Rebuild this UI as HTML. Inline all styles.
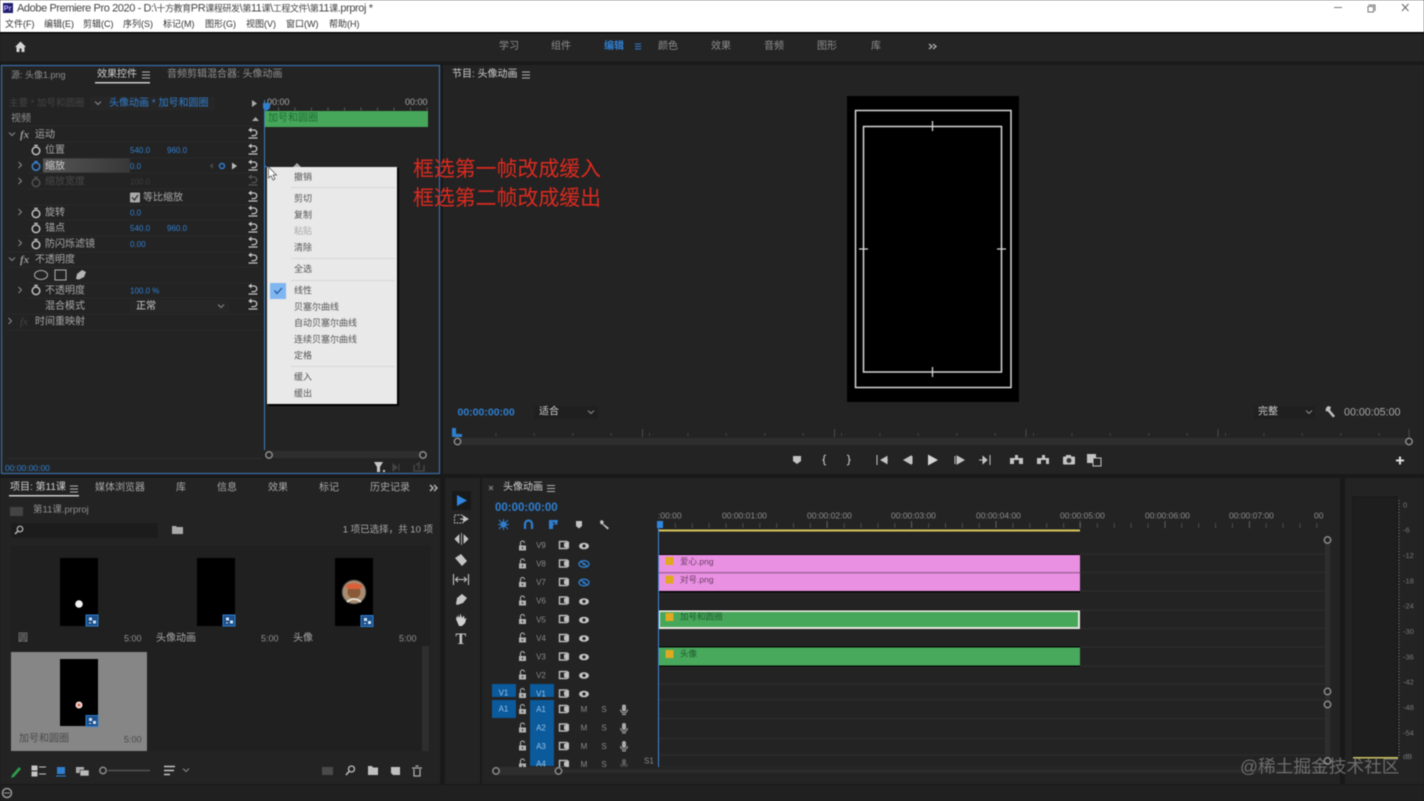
<!DOCTYPE html>
<html lang="zh-CN"><head><meta charset="utf-8"><title>Adobe Premiere Pro 2020</title>
<style>
html,body{margin:0;padding:0;width:1424px;height:801px;overflow:hidden;background:#191919}
svg{display:block;position:absolute;left:0;top:0;filter:blur(.45px)}
text{font-family:"Liberation Sans","Noto Sans CJK SC",sans-serif;font-size:10px;fill:#a8a8a8;dominant-baseline:central;white-space:pre;transform:translateY(.7px)}
.b{fill:#2f7fd0}.d{fill:#555}.w{fill:#cfcfcf}.g{fill:#8f8f8f}
.tk{font-size:8.5px;fill:#8e8e8e}.v{font-size:8px;fill:#8a8a8a}.db{font-size:7.5px;fill:#777}
.l{font-size:11px}.c{font-size:9px}.mn{font-size:9px;fill:#333}.cx{font-size:9px;fill:#555}.n{font-size:8px}
</style></head><body>
<svg width="1424" height="801" viewBox="0 0 1424 801" xmlns="http://www.w3.org/2000/svg">
<defs>
<linearGradient id="sc"><stop offset="0" stop-color="#555"/><stop offset="1" stop-color="#383838"/></linearGradient>
<g id="rs"><path d="M-4.500 5H4.500M-2.500-3H1A2.800 2.800 0 0 1 1 2.600H-1.500" fill="none" stroke="#c4c4c4" stroke-width="1.300"/><path d="M-1.500-5.500-4.800-3-1.500-.5Z" fill="#c4c4c4"/></g>
<g id="sw"><circle r="3.800" cy=".8" fill="none" stroke="#c0c0c0" stroke-width="1.500"/><path d="M-1.800-4.600H1.800" stroke="#c0c0c0" stroke-width="1.400"/></g>
<path id="chR" d="M-1.500-3 1.500 0-1.500 3" fill="none" stroke="#8a8a8a" stroke-width="1"/>
<path id="chD" d="M-3-1.500 0 1.500 3-1.500" fill="none" stroke="#8a8a8a" stroke-width="1"/>
<g id="lk"><rect x="-3.500" y="-.5" width="7" height="5" fill="#b5b5b5"/><path d="M-2-.5V-3A2 2 0 0 1 2-3" fill="none" stroke="#b5b5b5" stroke-width="1.100"/><rect x="-.6" y="1" width="1.200" height="2" fill="#333"/></g>
<g id="fm"><rect x="-4.500" y="-3.500" width="7.500" height="7" fill="none" stroke="#c0c0c0" stroke-width="1.400"/><path d="M0-2 5-3.500V3.500L0 2Z" fill="#c0c0c0"/></g>
<g id="ey"><ellipse rx="5" ry="3.300" fill="#c4c4c4"/><circle r="1.600" fill="#222"/></g>
<g id="eb"><ellipse rx="5" ry="3.300" fill="none" stroke="#2f7fd0" stroke-width="1.300"/><circle r="1.300" fill="#2f7fd0"/><path d="M-4-3 4 3" stroke="#2f7fd0" stroke-width="1.200"/></g>
<g id="mic"><rect x="-2" y="-5" width="4" height="7" rx="2" fill="#aaa"/><path d="M-3.500 0A3.500 3.500 0 0 0 3.500 0M-2 5H2" fill="none" stroke="#aaa"/></g>
<g id="hb"><path d="M-4-3H4M-4 0H4M-4 3H4" stroke="#b0b0b0" stroke-width="1.100"/></g>
<g id="kn"><circle r="3.200" fill="#222" stroke="#8c8c8c" stroke-width="1.500"/></g>
<g id="bd"><rect x="-6" y="-5.500" width="12" height="11" fill="#1d4f88" stroke="#2f7fd0"/><path d="M-3-3H0V0H-3ZM1 0H4V3H1ZM-3 2H-1V3H-3Z" fill="#cfe0f2"/></g>
</defs>

<!-- chrome -->
<rect width="1424" height="801" fill="#191919"/>
<rect width="1424" height="32" fill="#fff"/>
<rect y="32" width="1424" height="1.500" fill="#000"/>
<rect y="33.500" width="1424" height="28" fill="#242424"/>
<rect x="3" y="3" width="10" height="10" fill="#1f1f6b"/><text x="3.600" y="7.500" style="font-size:7.500px;font-weight:bold;fill:#b9a4ff">Pr</text>
<text x="17" y="8" textLength="356" style="fill:#444"><tspan class="l" style="fill:#444">Adobe Premiere Pro 2020 - D:\</tspan><tspan class="c" style="fill:#444">十方教育</tspan><tspan class="l" style="fill:#444">PR</tspan><tspan class="c" style="fill:#444">课程研发</tspan><tspan class="l" style="fill:#444">\</tspan><tspan class="c" style="fill:#444">第</tspan><tspan class="l" style="fill:#444">11</tspan><tspan class="c" style="fill:#444">课</tspan><tspan class="l" style="fill:#444">\</tspan><tspan class="c" style="fill:#444">工程文件</tspan><tspan class="l" style="fill:#444">\</tspan><tspan class="c" style="fill:#444">第</tspan><tspan class="l" style="fill:#444">11</tspan><tspan class="c" style="fill:#444">课</tspan><tspan class="l" style="fill:#444">.prproj *</tspan></text>
<text x="5" y="23.500" class="mn">文件(F)</text><text x="44" y="23.500" class="mn">编辑(E)</text><text x="83" y="23.500" class="mn">剪辑(C)</text><text x="123" y="23.500" class="mn">序列(S)</text><text x="163" y="23.500" class="mn">标记(M)</text><text x="205" y="23.500" class="mn">图形(G)</text><text x="246" y="23.500" class="mn">视图(V)</text><text x="286" y="23.500" class="mn">窗口(W)</text><text x="329" y="23.500" class="mn">帮助(H)</text>
<path d="M1334 7.500H1342" stroke="#777"/><path d="M1368.500 5H1375V11M1368 6.500H1373.500V12H1368Z" fill="none" stroke="#777"/><path d="M1402 4 1408.500 11M1408.500 4 1402 11" stroke="#666"/>

<!-- workspace bar -->
<path d="M20.500 41.500 15 47H16.500V52H19.500V48.500H21.500V52H24.500V47H26Z" fill="#d5d5d5"/>
<text x="499" y="46" class="g">学习</text><text x="551" y="46" class="g">组件</text><text x="604" y="46" class="b" style="font-weight:bold">编辑</text>
<path d="M635 44H641M635 46.500H641M635 49H641" stroke="#2f7fd0"/>
<text x="658" y="46" class="g">颜色</text><text x="711" y="46" class="g">效果</text><text x="764" y="46" class="g">音频</text><text x="817" y="46" class="g">图形</text><text x="871" y="46" class="g">库</text>
<path d="M929 44 932 46.500 929 49M933 44 936 46.500 933 49" fill="none" stroke="#aaa" stroke-width="1.400"/>

<!-- panels -->
<rect x="1.500" y="65.500" width="438" height="408" fill="#232323" stroke="#3a6ea8" stroke-width="1.200"/>
<rect x="443" y="65" width="981" height="409" fill="#232323"/>
<rect x="0" y="478" width="440" height="306" fill="#232323"/>
<rect x="445" y="478" width="35" height="306" fill="#232323"/>
<rect x="482" y="478" width="858" height="306" fill="#232323"/>
<rect x="1345" y="478" width="79" height="306" fill="#232323"/>
<rect y="785" width="1424" height="16" fill="#202020"/>
<circle cx="7" cy="793" r="4.500" fill="none" stroke="#999" stroke-width="1.500"/><path d="M4 793H10" stroke="#999"/>

<!-- effect controls -->
<text x="11" y="74.500" class="g" style="font-size:9px">源: 头像1.png</text>
<text x="97" y="74" class="w">效果控件</text><use href="#hb" x="146" y="75"/>
<rect x="95" y="82" width="55" height="1.500" fill="#ccc"/>
<text x="167" y="74" class="g">音频剪辑混合器: 头像动画</text>
<text x="9" y="103" style="fill:#444;font-size:9.500px">主要 * 加号和圆圈</text>
<rect x="90" y="97" width="125" height="13" fill="#262626"/><use href="#chD" x="98" y="103"/>
<text x="109" y="103" class="b">头像动画 * 加号和圆圈</text>
<path d="M252 100 257 103.500 252 107Z" fill="#aaa"/>
<text x="267" y="101.500" style="font-size:9px;fill:#aaa">00:00</text><text x="405" y="101.500" style="font-size:9px">00:00</text>
<path d="M263 103H270V108L266.500 111 263 108Z" fill="#2f7fd0"/>
<line x1="278" y1="109" x2="428" y2="109" stroke="#5a5a5a" stroke-width="3" stroke-dasharray="1 15.500"/>
<rect x="265" y="111" width="163" height="16" fill="#46a75a"/><text x="268" y="118" style="fill:#1f6b32">加号和圆圈</text>
<line x1="264.500" y1="100" x2="264.500" y2="450" stroke="#3f7fc0"/>
<path d="M8 126H260M28 142H260M28 158H260M28 173H260M28 189H260M28 205H260M28 220H260M28 236H260M8 252H260M8 267H260M28 283H260M28 298H260M8 314H260M8 330H260" stroke="#292929"/>
<text x="11" y="118.500" class="g">视频</text><path d="M252 121 255.500 117 259 121Z" fill="#aaa"/>
<use href="#chD" x="12" y="134"/><text x="20" y="134.500" style="font-family:'Liberation Serif',serif;font-style:italic;font-size:11px;font-weight:bold;fill:#9a9a9a">fx</text><text x="35" y="134.500">运动</text><use href="#rs" x="253" y="133"/>
<use href="#sw" x="36" y="150"/><text x="45" y="150">位置</text><text x="130" y="150" class="b n">540.0</text><text x="167" y="150" class="b n">960.0</text><use href="#rs" x="253" y="149"/>
<use href="#chR" x="20" y="165"/><rect x="43" y="158.500" width="87" height="14" fill="url(#sc)"/>
<circle cx="36" cy="166.500" r="3.800" fill="none" stroke="#3b82cf" stroke-width="1.500"/><path d="M34.200 161.500H37.800" stroke="#3b82cf" stroke-width="1.300"/>
<text x="45" y="166" class="w">缩放</text><text x="130" y="166" class="b n">0.0</text>
<path d="M213 163 209.500 166 213 169Z" fill="#444"/><circle cx="222" cy="166" r="2.500" fill="none" stroke="#2f7fd0" stroke-width="1.400"/><path d="M232 162.500 237 166 232 169.500Z" fill="#bbb"/><use href="#rs" x="253" y="165"/>
<use href="#chR" x="20" y="181"/><g opacity=".3"><use href="#sw" x="36" y="182"/></g><text x="45" y="181.500" style="fill:#484848">缩放宽度</text><text x="130" y="181.500" class="n" style="fill:#3d3d3d">100.0</text><g opacity=".3"><use href="#rs" x="253" y="180"/></g>
<rect x="130" y="192.500" width="10" height="10" rx="1" fill="#aaa"/><path d="M132 197.500 134.500 200 138 195" fill="none" stroke="#333" stroke-width="1.300"/><text x="143" y="197.500">等比缩放</text><use href="#rs" x="253" y="196"/>
<use href="#chR" x="20" y="212"/><use href="#sw" x="36" y="213"/><text x="45" y="212.500">旋转</text><text x="130" y="212.500" class="b n">0.0</text><use href="#rs" x="253" y="211"/>
<use href="#sw" x="36" y="228"/><text x="45" y="228">锚点</text><text x="130" y="228" class="b n">540.0</text><text x="167" y="228" class="b n">960.0</text><use href="#rs" x="253" y="227"/>
<use href="#chR" x="20" y="243"/><use href="#sw" x="36" y="244"/><text x="45" y="244">防闪烁滤镜</text><text x="130" y="244" class="b n">0.00</text><use href="#rs" x="253" y="242"/>
<use href="#chD" x="12" y="259"/><text x="20" y="259.500" style="font-family:'Liberation Serif',serif;font-style:italic;font-size:11px;font-weight:bold;fill:#9a9a9a">fx</text><text x="35" y="259.500">不透明度</text><use href="#rs" x="253" y="258"/>
<ellipse cx="41" cy="275" rx="6.500" ry="4.500" fill="none" stroke="#b0b0b0"/><rect x="55" y="270" width="11" height="10" fill="none" stroke="#b0b0b0"/><path d="M76 279 77 274 82 270 86 272 84 277 79 279.500Z" fill="#b5b5b5"/>
<use href="#chR" x="20" y="290"/><use href="#sw" x="36" y="290"/><text x="45" y="290.500">不透明度</text><text x="130" y="290.500" class="b n">100.0 %</text><use href="#rs" x="253" y="289"/>
<text x="45" y="306">混合模式</text><rect x="130" y="300" width="99" height="12" fill="#262626"/><text x="136" y="306" class="w">正常</text><use href="#chD" x="221" y="306"/><use href="#rs" x="253" y="304"/>
<use href="#chR" x="10" y="321"/><text x="20" y="321.500" style="font-family:'Liberation Serif',serif;font-style:italic;font-size:11px;fill:#444">fx</text><text x="35" y="321.500">时间重映射</text>
<rect x="269" y="451" width="154" height="7" fill="#2e2e2e"/><use href="#kn" x="269" y="455"/><use href="#kn" x="423" y="455"/>
<path d="M8 458.500H262" stroke="#2e2e2e"/>
<text x="5" y="467.500" class="b" style="font-size:8.500px">00:00:00:00</text>
<path d="M374 462H383L380 467V472H377V467Z" fill="#c8c8c8"/><rect x="383" y="470" width="2" height="2" fill="#c8c8c8"/>
<path d="M393 464 397 467.500 393 471ZM399 464V471" fill="#444" stroke="#444"/><path d="M414 465V471H424V465M419 469V463L416 465" fill="none" stroke="#444" stroke-width="1.500"/>

<!-- graph marker -->
<path d="M297 163 301 167H293Z" fill="#aaa"/>
<path d="M264 165 267 166.500 264 168Z" fill="#2f7fd0"/>

<!-- context menu -->
<rect x="268" y="168" width="131" height="238" fill="#000"/>
<rect x="267" y="167" width="130" height="237" fill="#e9e9e9"/>
<text x="294" y="176.500" class="cx">撤销</text><text x="294" y="198" class="cx">剪切</text><text x="294" y="214.500" class="cx">复制</text><text x="294" y="230.500" class="cx" style="fill:#aaa">粘贴</text><text x="294" y="247" class="cx">清除</text><text x="294" y="268.500" class="cx">全选</text><text x="294" y="290" class="cx">线性</text><text x="294" y="306.500" class="cx">贝塞尔曲线</text><text x="294" y="322.500" class="cx">自动贝塞尔曲线</text><text x="294" y="339" class="cx">连续贝塞尔曲线</text><text x="294" y="355" class="cx">定格</text><text x="294" y="376.500" class="cx">缓入</text><text x="294" y="393" class="cx">缓出</text>
<path d="M291 187.500H395M291 258.500H395M291 280.500H395M291 366.500H395" stroke="#d6d6d6"/>
<rect x="270" y="283" width="16" height="16" fill="#80b6ef"/><path d="M274.500 290.500 277 293.500 282 288" fill="none" stroke="#1c5aa8" stroke-width="1.300"/>
<path d="M268.500 167V178L271 175.800 273 180 275 179 273 175H276.500Z" fill="#fff" stroke="#444" stroke-width=".7"/>

<!-- red text -->
<text x="413" y="167.500" style="font-size:20.900px;fill:#dd2a1f;font-family:'Noto Sans CJK SC',sans-serif">框选第一帧改成缓入</text>
<text x="413" y="196.500" style="font-size:20.900px;fill:#dd2a1f;font-family:'Noto Sans CJK SC',sans-serif">框选第二帧改成缓出</text>

<!-- program monitor -->
<text x="452" y="74" class="w">节目: 头像动画</text><use href="#hb" x="526" y="75"/>
<rect x="847" y="96" width="172" height="306" fill="#000"/>
<rect x="855.500" y="110.500" width="155.500" height="277" fill="none" stroke="#d5d5d5" stroke-width="1.500"/>
<rect x="863.500" y="126.500" width="138" height="245.500" fill="none" stroke="#d5d5d5" stroke-width="1.500"/>
<path d="M932.500 121V131M932.500 367V377M859 249H868M997 249H1006" stroke="#d5d5d5" stroke-width="1.300"/>
<text x="457.500" y="412" class="b" style="font-size:10.500px;font-weight:bold">00:00:00:00</text>
<rect x="534" y="406" width="64" height="13" fill="#1f1f1f"/><text x="539" y="411.500" class="w">适合</text><use href="#chD" x="591" y="412"/>
<rect x="1254" y="406" width="61" height="13" fill="#1f1f1f"/><text x="1258" y="411.500" class="w">完整</text><use href="#chD" x="1309" y="412"/>
<path d="M1326 408 1328 406 1331 407 1330 410 1335 416 1333 417.500 1328 411.500 1325.500 411Z" fill="#c0c0c0"/>
<text x="1344" y="412" style="font-size:10.700px;fill:#a8a8a8">00:00:05:00</text>
<line x1="457" y1="434.500" x2="1409" y2="434.500" stroke="#444" stroke-width="3" stroke-dasharray="1 37.400"/>
<path d="M642.500 429V437M834.500 429V437M1026 429V437M1218 429V437M1409 429V437" stroke="#4a4a4a"/>
<rect x="457" y="438" width="952" height="7" fill="#2e2e2e"/>
<path d="M452 428H456V434H462V437H452Z" fill="#2f7fd0"/>
<use href="#kn" x="457.500" y="441.500"/><use href="#kn" x="1409" y="441.500"/>
<path d="M793 456H801V461L797 464 793 461Z" fill="#c4c4c4"/>
<path d="M826 455Q824 455 824 457.500V459L823 460 824 461V462.500Q824 465 826 465M847 455Q849 455 849 457.500V459L850 460 849 461V462.500Q849 465 847 465" fill="none" stroke="#c4c4c4" stroke-width="1.100"/>
<path d="M877 455V465M887 456.500 881 460 887 463.500ZM885 460H888" fill="#c4c4c4" stroke="#c4c4c4"/>
<path d="M911 456 904 460 911 464ZM912 456V464" fill="#c4c4c4" stroke="#c4c4c4"/>
<path d="M928 454.500 938 460 928 465.500Z" fill="#d5d5d5"/>
<path d="M955 456V464M957 456 964 460 957 464Z" fill="#c4c4c4" stroke="#c4c4c4"/>
<path d="M979 460H986M983 456.500 987 460 983 463.500ZM990 455V465" fill="#c4c4c4" stroke="#c4c4c4"/>
<path d="M1010 458H1015V455H1018V458H1023V464H1010Z" fill="#c4c4c4"/><rect x="1014" y="460" width="5" height="4" fill="#232323"/>
<path d="M1037 458H1042V455H1045V458H1049V464H1037Z" fill="#c4c4c4"/><rect x="1041" y="460" width="5" height="4" fill="#232323"/>
<rect x="1063" y="456.500" width="12" height="8" rx="1" fill="#c4c4c4"/><rect x="1066" y="455" width="5" height="2" fill="#c4c4c4"/><circle cx="1069" cy="460.500" r="2.500" fill="#333"/>
<rect x="1087" y="454" width="9" height="9" fill="#c4c4c4"/><rect x="1093" y="458" width="8" height="8" fill="#232323" stroke="#c4c4c4"/>
<path d="M1400 456.500V464.500M1396 460.500H1404" stroke="#ddd" stroke-width="2"/>

<!-- project panel -->
<text x="10" y="487" class="w">项目: 第11课</text><use href="#hb" x="74" y="489"/><rect x="9" y="495" width="70" height="1.500" fill="#ccc"/>
<text x="95" y="487.500">媒体浏览器</text><text x="176" y="487.500">库</text><text x="217" y="487.500">信息</text><text x="268" y="487.500">效果</text><text x="319" y="487.500">标记</text><text x="370" y="487.500">历史记录</text>
<path d="M430 485 433 488 430 491M434 485 437 488 434 491" fill="none" stroke="#bbb" stroke-width="1.400"/>
<rect x="10" y="507" width="13" height="9" fill="#444"/><text x="33" y="509.500" class="g" style="font-size:9.500px">第11课.prproj</text>
<rect x="11" y="523" width="147" height="15" fill="#1c1c1c"/><circle cx="20" cy="529" r="2.800" fill="none" stroke="#bbb" stroke-width="1.200"/><path d="M18 531 15 534" stroke="#bbb" stroke-width="1.400"/>
<path d="M172 526H176L177 527H183V534H172Z" fill="#aaa"/>
<text x="433" y="529.500" text-anchor="end" style="font-size:9.500px">1 项已选择，共 10 项</text>
<rect x="11" y="546" width="419" height="205" fill="#202020"/>
<rect x="60" y="558" width="38" height="68" fill="#000"/><circle cx="79" cy="604" r="3.800" fill="#f2f2f2"/>
<use href="#bd" x="92" y="620.500"/>
<rect x="197" y="558" width="38" height="68" fill="#000"/><use href="#bd" x="229" y="620.500"/>
<rect x="335" y="558" width="38" height="68" fill="#000"/><circle cx="354" cy="592" r="12" fill="#a88c72" stroke="#3a3a3a"/><circle cx="354" cy="592" r="6.500" fill="#8a5a38"/><path d="M345 586Q354 580 363 586L360 589 348 589Z" fill="#d8613a"/><path d="M347 602Q354 596 361 602" stroke="#e6dfd2" stroke-width="2" fill="none"/><use href="#bd" x="367" y="621"/>
<text x="18" y="638" class="g">圆</text><text x="124" y="638" class="g" style="font-size:9px">5:00</text>
<text x="156" y="638">头像动画</text><text x="261" y="638" class="g" style="font-size:9px">5:00</text>
<text x="293" y="638">头像</text><text x="399" y="638" class="g" style="font-size:9px">5:00</text>
<rect x="11" y="652" width="136" height="99" fill="#868686"/>
<rect x="60" y="659" width="38" height="67" fill="#000"/><circle cx="79" cy="705" r="3.500" fill="#f2d8d0"/><circle cx="79" cy="705" r="1.500" fill="#e06a50"/><use href="#bd" x="92" y="721"/>
<text x="19" y="738.500" style="fill:#4a4a4a">加号和圆圈</text><text x="124" y="739" style="font-size:9px;fill:#4a4a4a">5:00</text>
<rect x="422" y="646" width="7" height="105" fill="#2e2e2e"/>
<path d="M12 775 19 767 21 769 14 777 11 778Z" fill="#2e9c4a"/>
<path d="M32 766H37V770H32ZM32 772H37V776H32ZM39 767H46M39 774H46" fill="#c4c4c4" stroke="#c4c4c4"/>
<rect x="57" y="767" width="8" height="7" fill="#2f7fd0"/><path d="M56 776H66" stroke="#2f7fd0"/>
<rect x="76" y="767" width="8" height="6" fill="#aaa"/><rect x="80" y="770" width="9" height="6" fill="#bbb" stroke="#232323" stroke-width=".6"/>
<use href="#kn" x="103" y="770.500"/><path d="M108 770.500H150" stroke="#555" stroke-width="1.500"/>
<path d="M164 766.500H175M164 770.500H174M164 774.500H170" stroke="#c4c4c4" stroke-width="1.500"/><use href="#chD" x="186" y="770"/>
<path d="M322 767H333V775H322Z" fill="#4a4a4a"/>
<circle cx="351.500" cy="769" r="3" fill="none" stroke="#bbb" stroke-width="1.300"/><path d="M349 771.500 346 775" stroke="#bbb" stroke-width="1.500"/>
<path d="M368 766H372L373 767.500H378V775H368Z" fill="#c0c0c0"/>
<path d="M391 767H400V775H393L391 773Z" fill="#c0c0c0"/>
<path d="M412 768H422M414 769V776H420V769M415.500 766H418.500" fill="none" stroke="#aaa" stroke-width="1.300"/>

<!-- tools -->
<rect x="452" y="491" width="19" height="19" fill="#191919"/><path d="M457 495V506L467 500.500Z" fill="#2f87e0"/>
<path d="M454.500 515H463V523H454.500Z" fill="none" stroke="#b5b5b5" stroke-dasharray="2 1"/><path d="M460 519H466M464 516.500 468 519 464 521.500Z" fill="#c4c4c4" stroke="#c4c4c4"/>
<path d="M461.500 533V545M459 535 455 539 459 543ZM464 535 468 539 464 543Z" fill="#c4c4c4" stroke="#c4c4c4" stroke-width=".8"/>
<path d="M455 558 461 554 467 561 462 566Z" fill="#c4c4c4"/>
<path d="M453.500 574V585M468.500 574V585M456 579.500H466M458 577 455.500 579.500 458 582M464 577 466.500 579.500 464 582" fill="none" stroke="#c4c4c4" stroke-width="1.100"/>
<path d="M456 604 457 598 462 594 467 598 463 603 457 605Z" fill="#c4c4c4"/>
<path d="M456 619 457 616 458 618V614.500L459.500 618 460.500 613.500 462 618 464 615.500 464.500 619 466.500 618 465 623 462 626H459Z" fill="#d0d0d0"/>
<text x="455.500" y="639" style="font-family:'Liberation Serif',serif;font-size:16px;font-weight:bold;fill:#c8c8c8">T</text>

<!-- timeline -->
<path d="M489 486 493 490M493 486 489 490" stroke="#888"/>
<text x="503" y="487" class="w">头像动画</text><use href="#hb" x="551" y="488.500"/>
<text x="495" y="507.500" class="b" style="font-size:11.500px;font-weight:bold">00:00:00:00</text>
<circle cx="503.500" cy="524.500" r="3" fill="#2f7fd0"/><path d="M499 520 508 529M508 520 499 529M503.500 519V530M498 524.500H509" stroke="#2f7fd0"/>
<path d="M525 529V524A3.500 3.500 0 0 1 532 524V529" fill="none" stroke="#2f7fd0" stroke-width="2.200"/>
<path d="M549 520H558L557 525H553V529H549Z" fill="#2f7fd0"/><path d="M553 522 558 528" stroke="#222"/>
<path d="M576 521H582V526L579 528.500 576 526Z" fill="#c4c4c4"/>
<path d="M600 521 602 520 604 522 603 523.500 609 528 607.500 529.500 602.500 524.500 600.500 524Z" fill="#c4c4c4"/>
<text x="658" y="515" class="tk">:00:00</text><text x="722" y="515" class="tk">00:00:01:00</text><text x="807" y="515" class="tk">00:00:02:00</text><text x="891" y="515" class="tk">00:00:03:00</text><text x="976" y="515" class="tk">00:00:04:00</text><text x="1060" y="515" class="tk">00:00:05:00</text><text x="1145" y="515" class="tk">00:00:06:00</text><text x="1229" y="515" class="tk">00:00:07:00</text><text x="1314" y="515" class="tk">00</text>
<line x1="658" y1="525.500" x2="1325" y2="525.500" stroke="#4c4c4c" stroke-width="5" stroke-dasharray="1 15.880"/>
<path d="M827 521V528M911.500 521V528M996 521V528M1080 521V528M1165 521V528M1249.500 521V528" stroke="#5c5c5c"/>
<rect x="658" y="529.500" width="422" height="2" fill="#d9c45a"/>
<path d="M658 554H1326M658 572.500H1326M658 591H1326M658 610H1326M658 628.500H1326M658 647H1326M658 666H1326M658 684H1326M658 699.500H1326M658 718.500H1326M658 738.500H1326M658 755H1326M658 767H1326" stroke="#2e2e2e"/>
<rect x="658" y="554" width="422" height="38.500" fill="#000"/>
<rect x="658" y="555" width="422" height="17.500" fill="#ea90e2"/><rect x="658" y="573.500" width="422" height="17.500" fill="#ea90e2"/><rect x="658" y="572" width="422" height="1.500" fill="#a866a2"/>
<rect x="658" y="610" width="422" height="19" fill="#e8e8e0"/><rect x="660" y="612" width="418" height="15" fill="#46a75a"/><rect x="658" y="609.500" width="422" height=".8" fill="#000"/>
<rect x="658" y="646.500" width="422" height="20" fill="#000"/><rect x="658" y="647.500" width="422" height="18" fill="#48a85c"/>
<rect x="665.500" y="557" width="8" height="8" fill="#e0a91f"/><rect x="665.500" y="575.500" width="8" height="8" fill="#e0a91f"/><rect x="665.500" y="613" width="8" height="8" fill="#e0a91f"/><rect x="665.500" y="650" width="8" height="8" fill="#e0a91f"/>
<text x="680" y="561" style="font-size:8.500px;fill:#6a3c66">爱心.png</text><text x="680" y="579" style="font-size:8.500px;fill:#6a3c66">对号.png</text><text x="680" y="616" style="font-size:8.500px;fill:#1e5a2c">加号和圆圈</text><text x="680" y="653" style="font-size:8.500px;fill:#1e5a2c">头像</text>
<line x1="658.500" y1="522" x2="658.500" y2="767" stroke="#3f86d8"/>
<path d="M657 521H663V528H657Z" fill="#2f87e0"/>

<!-- track headers -->
<rect x="492" y="684" width="24" height="13" fill="#0a5a9c"/><rect x="492" y="700" width="24" height="18" fill="#0a5a9c"/>
<rect x="530" y="684" width="24" height="13" fill="#0a5a9c"/><rect x="530" y="700" width="24" height="66" fill="#0a5a9c"/>
<use href="#lk" x="522.500" y="546"/><use href="#lk" x="522.500" y="564"/><use href="#lk" x="522.500" y="582.500"/><use href="#lk" x="522.500" y="601"/><use href="#lk" x="522.500" y="619.500"/><use href="#lk" x="522.500" y="638"/><use href="#lk" x="522.500" y="656.500"/><use href="#lk" x="522.500" y="675"/><use href="#lk" x="522.500" y="693.500"/><use href="#lk" x="522.500" y="709.500"/><use href="#lk" x="522.500" y="728"/><use href="#lk" x="522.500" y="746"/><use href="#lk" x="522.500" y="764"/>
<use href="#fm" x="564" y="545"/><use href="#fm" x="564" y="563.500"/><use href="#fm" x="564" y="582"/><use href="#fm" x="564" y="600.500"/><use href="#fm" x="564" y="619"/><use href="#fm" x="564" y="638"/><use href="#fm" x="564" y="656.500"/><use href="#fm" x="564" y="675"/><use href="#fm" x="564" y="693.500"/><use href="#fm" x="564" y="709"/><use href="#fm" x="564" y="727.500"/><use href="#fm" x="564" y="746"/><use href="#fm" x="564" y="764"/>
<use href="#ey" x="584" y="546"/><use href="#eb" x="584" y="564"/><use href="#eb" x="584" y="582.500"/><use href="#ey" x="584" y="601.500"/><use href="#ey" x="584" y="620"/><use href="#ey" x="584" y="638.500"/><use href="#ey" x="584" y="657"/><use href="#ey" x="584" y="675.500"/><use href="#ey" x="584" y="694"/>
<text x="541" y="545" text-anchor="middle" class="v">V9</text><text x="541" y="563.500" text-anchor="middle" class="v">V8</text><text x="541" y="582" text-anchor="middle" class="v">V7</text><text x="541" y="600.500" text-anchor="middle" class="v">V6</text><text x="541" y="619.500" text-anchor="middle" class="v">V5</text><text x="541" y="638" text-anchor="middle" class="v">V4</text><text x="541" y="656.500" text-anchor="middle" class="v">V3</text><text x="541" y="675" text-anchor="middle" class="v">V2</text>
<text x="541" y="693.500" text-anchor="middle" class="v" style="fill:#9cc2e4">V1</text><text x="503.500" y="692.500" text-anchor="middle" class="v" style="fill:#9cc2e4">V1</text>
<text x="503.500" y="708.500" text-anchor="middle" class="v" style="fill:#9cc2e4">A1</text><text x="541" y="709" text-anchor="middle" class="v" style="fill:#9cc2e4">A1</text><text x="541" y="727.500" text-anchor="middle" class="v" style="fill:#9cc2e4">A2</text><text x="541" y="746" text-anchor="middle" class="v" style="fill:#9cc2e4">A3</text><text x="541" y="763.500" text-anchor="middle" class="v" style="fill:#9cc2e4">A4</text>
<text x="584" y="709" text-anchor="middle" class="v">M</text><text x="584" y="727.500" text-anchor="middle" class="v">M</text><text x="584" y="746" text-anchor="middle" class="v">M</text><text x="584" y="764" text-anchor="middle" class="v">M</text>
<text x="604" y="709" text-anchor="middle" class="v">S</text><text x="604" y="727.500" text-anchor="middle" class="v">S</text><text x="604" y="746" text-anchor="middle" class="v">S</text><text x="604" y="764" text-anchor="middle" class="v">S</text>
<use href="#mic" x="624" y="709.500"/><use href="#mic" x="624" y="728"/><use href="#mic" x="624" y="746"/><g opacity=".4"><use href="#mic" x="624" y="764"/></g>
<text x="644" y="760.500" class="v">S1</text>
<rect x="482" y="767" width="858" height="17" fill="#232323"/>
<rect x="496" y="767" width="62" height="8" fill="#2e2e2e"/><path d="M558 771H1325" stroke="#2b2b2b" stroke-width="4"/>
<use href="#kn" x="496" y="771"/><use href="#kn" x="558.500" y="771"/>
<rect x="1325" y="540" width="5" height="224" fill="#2e2e2e"/>
<use href="#kn" x="1327.500" y="540"/><use href="#kn" x="1327.500" y="691.500"/><use href="#kn" x="1327.500" y="704.500"/><use href="#kn" x="1327.500" y="761"/>

<!-- meter -->
<rect x="1353" y="497" width="44" height="261" fill="#1e1e1e" stroke="#171717"/>
<rect x="1353" y="757" width="45" height="1.500" fill="#cfc35a"/>
<line x1="1399" y1="500" x2="1399" y2="758" stroke="#777" stroke-dasharray="1 2"/>
<text x="1403" y="504.500" class="db">0</text><text x="1403" y="529.500" class="db">-6</text><text x="1403" y="555" class="db">-12</text><text x="1403" y="580.500" class="db">-18</text><text x="1403" y="605.500" class="db">-24</text><text x="1403" y="631" class="db">-30</text><text x="1403" y="656.500" class="db">-36</text><text x="1403" y="681.500" class="db">-42</text><text x="1403" y="707" class="db">-48</text><text x="1403" y="732.500" class="db">-54</text><text x="1403" y="756" class="db">dB</text>

<!-- watermark -->
<text x="1240" y="766" style="font-size:17.700px;fill:#9a9a9a;opacity:.62">@稀土掘金技术社区</text>
</svg>
</body></html>
